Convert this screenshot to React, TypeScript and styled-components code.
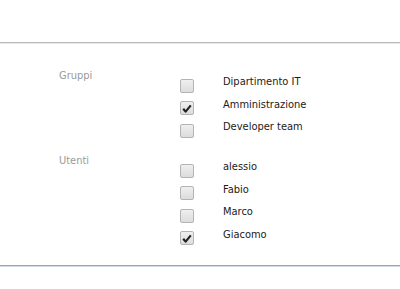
import React from "react";
import styled, { createGlobalStyle } from "styled-components";

const Global = createGlobalStyle`
  html, body { margin: 0; padding: 0; background: #fff; }
  body { font-family: "DejaVu Sans Condensed", "DejaVu Sans", Verdana, sans-serif; }
`;

const Page = styled.div`
  width: 400px;
  height: 289px;
  display: flex;
  flex-direction: column;
  overflow: hidden;
`;

const Header = styled.div`
  height: 42px;
  border-bottom: 1px solid #b9b9b9;
  box-shadow: 0 1px 0 #e6e6e6;
  flex: none;
`;

const Body = styled.div`
  padding: 26px 0 0 59px;
  height: 196px;
  display: flex;
  flex-direction: column;
  gap: 18px;
`;

const Footer = styled.div`
  border-top: 1px solid #93a3ba;
  box-shadow: 0 1px 0 #d3dce9;
`;

const Section = styled.div`
  display: grid;
  grid-template-columns: 121px 1fr;
`;

const Label = styled.div`
  font-size: 11px;
  color: #9a9a9a;
  line-height: 13px;
`;

const Items = styled.div`
  padding-top: 9px;
  display: flex;
  flex-direction: column;
  gap: 9.5px;
`;

const Row = styled.label`
  display: flex;
  align-items: flex-start;
  height: 13px;
`;

const Box = styled.span`
  width: 12px;
  height: 12px;
  border: 1px solid #b4b4b4;
  border-radius: 2px;
  background: linear-gradient(#efefef, #dcdcdc);
  display: flex;
  align-items: center;
  justify-content: center;
  margin-top: 0.5px;
  flex: none;
`;

const Text = styled.span`
  margin-left: 29px;
  margin-top: -3px;
  font-size: 11px;
  line-height: 13px;
  color: #1e1a16;
`;

const Check = () => (
  <svg width="10" height="9" viewBox="0 0 10 9">
    <path d="M1.2 4.8 L3.6 7.6 L8.8 1.4" fill="none" stroke="#222" strokeWidth="2.2" strokeLinejoin="round" />
  </svg>
);

const Item = ({ label, checked }: { label: string; checked?: boolean }) => (
  <Row>
    <Box>{checked && <Check />}</Box>
    <Text>{label}</Text>
  </Row>
);

export default function App() {
  return (
    <Page>
      <Global />
      <Header />
      <Body>
        <Section>
          <Label>Gruppi</Label>
          <Items>
            <Item label="Dipartimento IT" />
            <Item label="Amministrazione" checked />
            <Item label="Developer team" />
          </Items>
        </Section>
        <Section>
          <Label>Utenti</Label>
          <Items>
            <Item label="alessio" />
            <Item label="Fabio" />
            <Item label="Marco" />
            <Item label="Giacomo" checked />
          </Items>
        </Section>
      </Body>
      <Footer />
    </Page>
  );
}
